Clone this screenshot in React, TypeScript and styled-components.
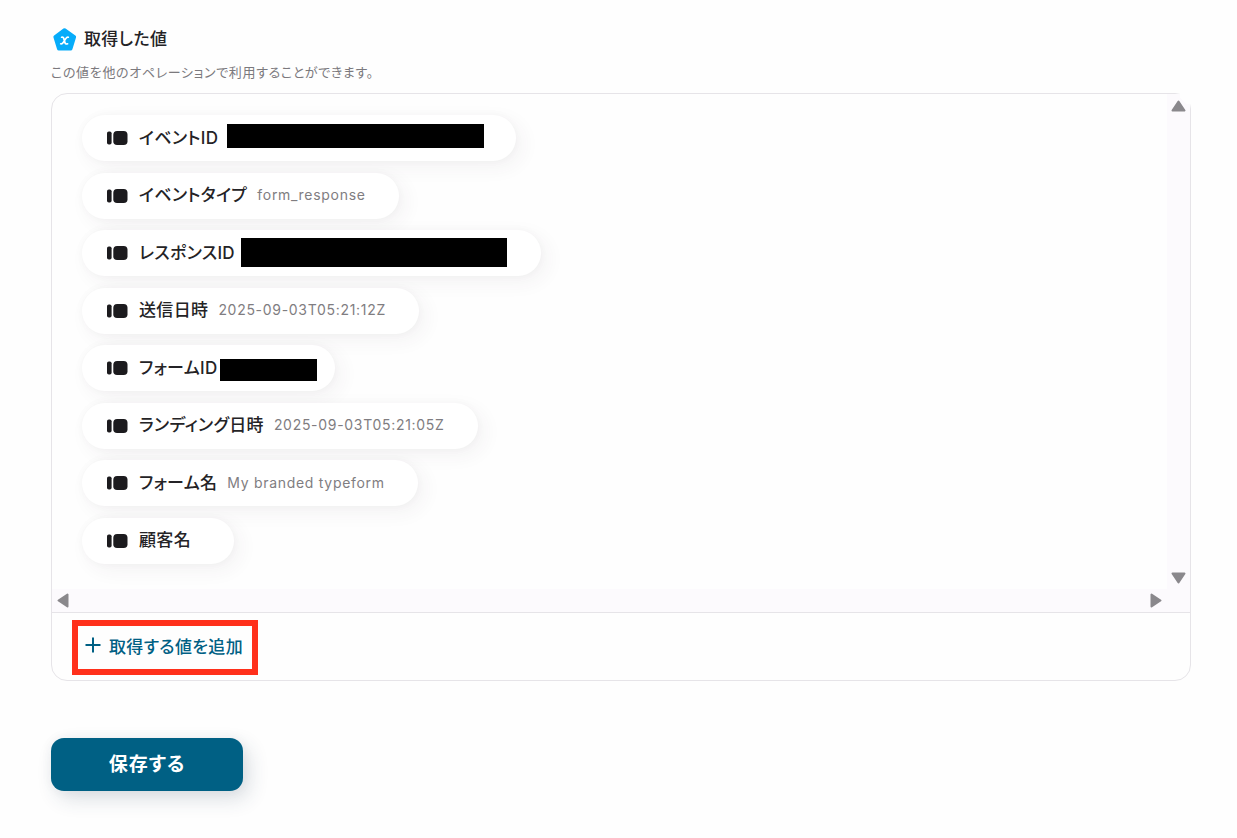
import React from "react";
import styled, { createGlobalStyle, css } from "styled-components";

const GlobalStyle = createGlobalStyle`
  *, *::before, *::after { box-sizing: border-box; }
  body {
    margin: 0;
    background: #fefefe;
    color: #242326;
    font-family: Inter, "Noto Sans CJK JP", sans-serif;
    font-feature-settings: "palt";
  }
  button { font: inherit; font-feature-settings: inherit; }
`;

const Page = styled.main`
  padding: 24px 46px 40px 51px;
`;

const labelText = css`
  font-size: 17px;
  font-weight: 500;
  letter-spacing: 0.02em;
  white-space: nowrap;
`;

const Heading = styled.h1`
  display: flex;
  align-items: center;
  gap: 7px;
  margin: 0;
  padding-left: 1px;
  line-height: 30px;
  ${labelText}
`;

const Description = styled.p`
  margin: 8px 0 11px;
  font-size: 13px;
  line-height: 20px;
  letter-spacing: 0.05em;
  color: #7b797d;
`;

const Panel = styled.section`
  border: 1px solid #e6e4e8;
  border-radius: 16px;
`;

const Viewport = styled.div`
  position: relative;
  display: grid;
  grid-template-columns: 1fr 23px;
  grid-template-rows: 1fr 23px;
`;

const ValueList = styled.ul`
  display: flex;
  flex-direction: column;
  align-items: flex-start;
  justify-content: space-between;
  min-height: 449px;
  margin: 0;
  padding: 0;
  list-style: none;
`;

const ListArea = styled.div`
  padding: 21px 30px 25px;
`;

const Pill = styled.li<{ $end?: number }>`
  display: flex;
  align-items: center;
  height: 46px;
  padding: 0 ${({ $end = 33 }) => $end}px 0 25px;
  border-radius: 23px;
  background: #fff;
  box-shadow: 6px 6px 20px rgba(60, 50, 70, 0.06), 0 0 8px rgba(60, 50, 70, 0.03);
`;

const Name = styled.span`
  margin-left: 11px;
  padding-bottom: 1px;
  line-height: 24px;
  ${labelText}
`;

const Value = styled.span`
  margin-left: 10px;
  padding-bottom: 1px;
  font-size: 14px;
  line-height: 24px;
  letter-spacing: 0.05em;
  color: #7f7d81;
  white-space: nowrap;
`;

const Redaction = styled.span<{ $width: number; $height: number; $gap: number; $drop?: number }>`
  width: ${({ $width }) => $width}px;
  height: ${({ $height }) => $height}px;
  margin-left: ${({ $gap }) => $gap}px;
  margin-top: ${({ $drop = 0 }) => $drop}px;
  background: #000;
`;

const Scrollbar = styled.div<{ $axis: "x" | "y" }>`
  display: flex;
  align-items: center;
  justify-content: space-between;
  background: #fcfafd;
  ${({ $axis }) =>
    $axis === "y"
      ? css`
          flex-direction: column;
          padding: 6px 0 5px;
        `
      : css`
          padding: 0 5px;
        `}
`;

const ScrollButton = styled.button`
  display: flex;
  padding: 0;
  border: 0;
  background: none;
`;

const Corner = styled.span`
  background: #fcfafd;
`;

const CornerCover = styled.span`
  position: absolute;
  top: -1px;
  right: -1px;
  width: 11px;
  height: 11px;
  background: #fefefe;
  clip-path: polygon(0 0, 100% 0, 100% 100%, 60% 100%, 0 40%);
`;

const PanelFooter = styled.footer`
  display: flex;
  padding: 7px 20px 5px;
  border-top: 1px solid #e6e4e8;
`;

const Highlight = styled.div`
  border: 6px solid #ff301b;
`;

const AddButton = styled.button`
  display: flex;
  align-items: center;
  gap: 8px;
  height: 43px;
  padding: 0 9px 5px 7px;
  border: 0;
  background: none;
  color: #006084;
  ${labelText}
`;

const SaveButton = styled.button`
  display: block;
  width: 192px;
  height: 53px;
  margin-top: 57px;
  padding: 0 0 4px;
  border: 0;
  border-radius: 13px;
  background: #006084;
  color: #fff;
  font-size: 19px;
  font-weight: 700;
  letter-spacing: 0.05em;
  box-shadow: 6px 8px 20px rgba(40, 60, 90, 0.16), 0 0 12px rgba(60, 50, 70, 0.05);
`;

const PentagonIcon = () => (
  <svg width="25" height="26" viewBox="0 0 25 26" aria-hidden="true">
    <path
      d="M12.500 4 L22.300 11 L18.700 22.800 H6.800 L3.200 11 Z"
      fill="#06acfa"
      stroke="#06acfa"
      strokeWidth="3.600"
      strokeLinejoin="round"
    />
    <path
      d="M9.600 11.200C11 10.800 11.500 11.500 11.900 12.900L12.900 16.400C13.300 17.800 14 18.300 15.600 17.800M16.300 11.200C15.200 10.900 14.600 11.400 13.600 12.900L11.400 16.300C10.500 17.700 9.800 18.200 8.700 17.800"
      fill="none"
      stroke="#fff"
      strokeWidth="1.700"
      strokeLinecap="round"
    />
  </svg>
);

const FieldIcon = () => (
  <svg width="21" height="14" viewBox="0 0 21 14" aria-hidden="true">
    <rect x="0" y="0.500" width="4.600" height="13" rx="1.800" fill="#1c1b1e" />
    <rect x="6.300" y="0" width="14.200" height="14" rx="3.800" fill="#1c1b1e" />
  </svg>
);

const PlusIcon = () => (
  <svg width="16" height="16" viewBox="0 0 16 16" aria-hidden="true">
    <path d="M8 0.500V15.500M0.500 8H15.500" stroke="#006084" strokeWidth="2" />
  </svg>
);

const arrowPaths = {
  up: "M7.500 1.500 L13.500 10.500 H1.500 Z",
  down: "M7.500 10.500 L13.500 1.500 H1.500 Z",
  left: "M1.500 7.500 L10.500 1.500 V13.500 Z",
  right: "M10.500 7.500 L1.500 1.500 V13.500 Z",
};

const Arrow = ({ to, label }: { to: keyof typeof arrowPaths; label: string }) => {
  const vertical = to === "up" || to === "down";
  const w = vertical ? 15 : 12;
  const h = vertical ? 12 : 15;
  return (
    <ScrollButton type="button" aria-label={label}>
      <svg width={w} height={h} viewBox={`0 0 ${w} ${h}`} aria-hidden="true">
        <path d={arrowPaths[to]} fill="#8a888c" stroke="#8a888c" strokeWidth="2" strokeLinejoin="round" />
      </svg>
    </ScrollButton>
  );
};

type Entry = {
  name: string;
  value?: string;
  hidden?: { width: number; height: number; gap: number; end: number; drop?: number };
};

const entries: Entry[] = [
  { name: "イベントID", hidden: { width: 257, height: 24, gap: 9, end: 32, drop: -4 } },
  { name: "イベントタイプ", value: "form_response" },
  { name: "レスポンスID", hidden: { width: 266, height: 29, gap: 6, end: 34, drop: -2 } },
  { name: "送信日時", value: "2025-09-03T05:21:12Z" },
  { name: "フォームID", hidden: { width: 97, height: 22, gap: 2, end: 18, drop: 4 } },
  { name: "ランディング日時", value: "2025-09-03T05:21:05Z" },
  { name: "フォーム名", value: "My branded typeform" },
  { name: "顧客名", value: "" },
];

export default function App() {
  return (
    <Page>
      <GlobalStyle />
      <Heading>
        <PentagonIcon />
        取得した値
      </Heading>
      <Description>この値を他のオペレーションで利用することができます。</Description>
      <Panel>
        <Viewport>
          <ListArea>
            <ValueList>
              {entries.map(({ name, value, hidden }) => (
                <Pill key={name} $end={hidden?.end}>
                  <FieldIcon />
                  <Name>{name}</Name>
                  {hidden ? (
                    <Redaction $width={hidden.width} $height={hidden.height} $gap={hidden.gap} $drop={hidden.drop} />
                  ) : (
                    <Value>{value}</Value>
                  )}
                </Pill>
              ))}
            </ValueList>
          </ListArea>
          <Scrollbar $axis="y">
            <Arrow to="up" label="上へスクロール" />
            <Arrow to="down" label="下へスクロール" />
          </Scrollbar>
          <Scrollbar $axis="x">
            <Arrow to="left" label="左へスクロール" />
            <Arrow to="right" label="右へスクロール" />
          </Scrollbar>
          <Corner />
          <CornerCover />
        </Viewport>
        <PanelFooter>
          <Highlight>
            <AddButton type="button">
              <PlusIcon />
              取得する値を追加
            </AddButton>
          </Highlight>
        </PanelFooter>
      </Panel>
      <SaveButton type="button">保存する</SaveButton>
    </Page>
  );
}
